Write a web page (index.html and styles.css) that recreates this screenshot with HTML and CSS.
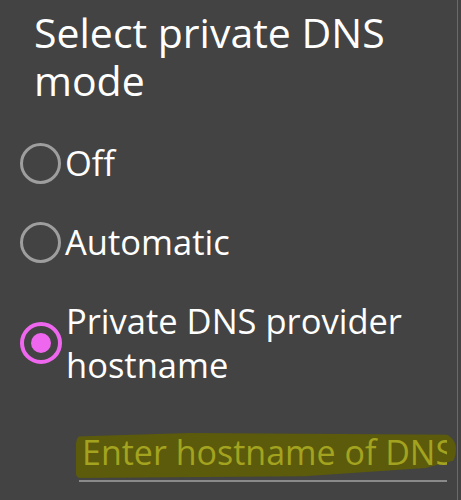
FILE: index.html
```html
<!DOCTYPE html>
<html lang="en">
<head>
  <meta charset="UTF-8">
  <meta name="viewport" content="width=device-width, initial-scale=1.0">
  <title>Private DNS</title>
  <link rel="stylesheet" href="styles.css">
</head>
<body>
  <div class="dialog">
    <h1 class="title">Select private DNS mode</h1>

    <div class="options">
      <label class="option">
        <span class="radio"></span>
        <span class="option-text">Off</span>
      </label>
      <label class="option">
        <span class="radio"></span>
        <span class="option-text">Automatic</span>
      </label>
      <label class="option">
        <span class="radio checked"></span>
        <span class="option-text">Private DNS provider hostname</span>
      </label>
    </div>

    <div class="field">
      <input type="text" class="hostname" placeholder="Enter hostname of DNS provider">
    </div>
  </div>
</body>
</html>
```

FILE: styles.css
```css
body {
  margin: 0;
  background: #434343;
  font-family: 'Open Sans', 'Noto Sans', sans-serif;
  color: #ffffff;
}

.dialog {
  width: 458px;
  height: 500px;
  border-right: 1px solid #6a6a6a;
  padding-top: 8px;
  box-sizing: border-box;
  overflow: hidden;
}

.title {
  margin: 0 0 37px 34px;
  font-size: 41px;
  font-weight: 400;
  line-height: 48px;
}

.options {
  display: flex;
  flex-direction: column;
  gap: 35px;
}

.option {
  display: flex;
  align-items: center;
  padding-left: 20px;
}

.radio {
  width: 41px;
  height: 41px;
  border: 3px solid #9e9e9e;
  border-radius: 50%;
  box-sizing: border-box;
  margin-right: 4px;
  flex-shrink: 0;
  display: flex;
  align-items: center;
  justify-content: center;
}

.radio.checked {
  width: 42px;
  height: 42px;
  border: 4px solid #f067ef;
}

.radio.checked::after {
  content: '';
  width: 20px;
  height: 20px;
  border-radius: 50%;
  background: #f067ef;
}

.option-text {
  font-size: 34.5px;
  line-height: 44px;
  width: 370px;
}

.field {
  position: relative;
  margin: 42px 0 0 79px;
  width: 368px;
  border-bottom: 2px solid #8a8a8a;
}

.field::before {
  content: '';
  position: absolute;
  left: -3px;
  top: 4px;
  width: 380px;
  height: 45px;
  background: #5b5b0b;
  border-radius: 14px 22px 40px 6px;
  clip-path: polygon(0 8%, 30% 0, 100% 4%, 100% 60%, 92% 78%, 60% 96%, 0 100%);
}

.hostname {
  position: relative;
  display: block;
  width: 100%;
  padding: 0 0 5px 3px;
  border: none;
  background: transparent;
  font-family: inherit;
  font-size: 34px;
  line-height: 46px;
  height: 51px;
  box-sizing: border-box;
  color: #a3a31f;
  outline: none;
}

.hostname::placeholder {
  color: #a3a31f;
  opacity: 1;
}
```
